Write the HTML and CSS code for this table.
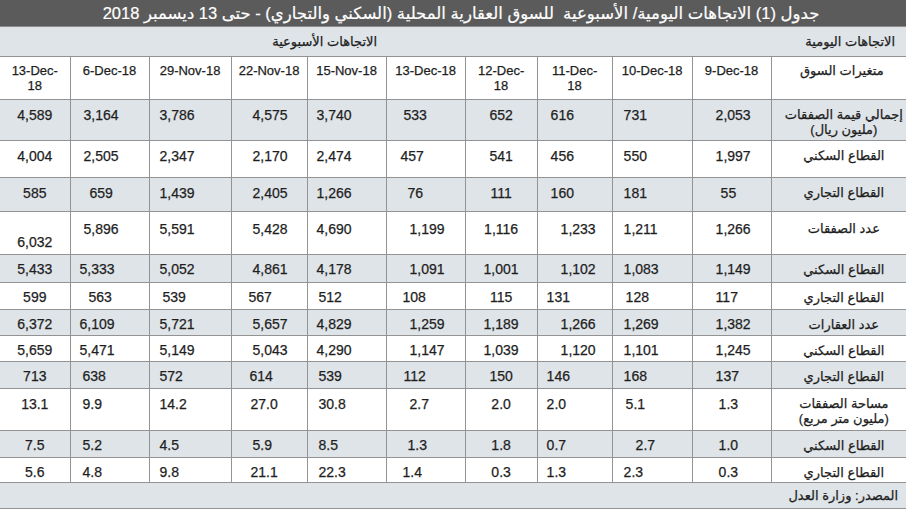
FILE: index.html
```html
<!DOCTYPE html>
<html lang="ar">
<head>
<meta charset="utf-8">
<link rel="stylesheet" href="styles.css">
</head>
<body>
<div class="sheet">
  <div class="title" dir="rtl">جدول (1) الاتجاهات اليومية/ الأسبوعية &nbsp;للسوق العقارية المحلية (السكني والتجاري) - حتى 13 ديسمبر 2018</div>
  <table class="grid" dir="rtl">
    <colgroup>
      <col class="c-label"><col class="c-9"><col class="c-10"><col class="c-11"><col class="c-12"><col class="c-13"><col class="c-15n"><col class="c-22n"><col class="c-29n"><col class="c-6d"><col class="c-13w">
    </colgroup>
    <tr class="sub">
      <th colspan="6">الاتجاهات اليومية</th>
      <th colspan="5">الاتجاهات الأسبوعية</th>
    </tr>
    <tr class="head">
      <th class="lab">متغيرات السوق</th>
      <th class="date">9-Dec-18</th>
      <th class="date">10-Dec-18</th>
      <th class="date">11-Dec-<br>18</th>
      <th class="date">12-Dec-<br>18</th>
      <th class="date">13-Dec-18</th>
      <th class="date">15-Nov-18</th>
      <th class="date">22-Nov-18</th>
      <th class="date">29-Nov-18</th>
      <th class="date">6-Dec-18</th>
      <th class="date">13-Dec-<br>18</th>
    </tr>
    <tr class="r1 shade">
      <td class="lab">إجمالي قيمة الصفقات<br>(مليون ريال)</td>
      <td>2,053</td><td>731</td><td>616</td><td>652</td><td class="p17">533</td><td>3,740</td><td>4,575</td><td>3,786</td><td>3,164</td><td>4,589</td>
    </tr>
    <tr class="r2">
      <td class="lab">القطاع السكني</td>
      <td>1,997</td><td>550</td><td>456</td><td>541</td><td class="p14">457</td><td>2,474</td><td>2,170</td><td>2,347</td><td>2,505</td><td>4,004</td>
    </tr>
    <tr class="r3 shade">
      <td class="lab">القطاع التجاري</td>
      <td class="p28">55</td><td>181</td><td>160</td><td>111</td><td class="p21">76</td><td>1,266</td><td>2,405</td><td>1,439</td><td class="p19">659</td><td>585</td>
    </tr>
    <tr class="r4">
      <td class="lab">عدد الصفقات</td>
      <td>1,266</td><td>1,211</td><td class="p23">1,233</td><td>1,116</td><td>1,199</td><td>4,690</td><td>5,428</td><td>5,591</td><td>5,896</td><td class="low">6,032</td>
    </tr>
    <tr class="r5 shade">
      <td class="lab">القطاع السكني</td>
      <td>1,149</td><td>1,083</td><td class="p23">1,102</td><td>1,001</td><td>1,091</td><td>4,178</td><td>4,861</td><td>5,052</td><td class="p9">5,333</td><td>5,433</td>
    </tr>
    <tr class="r6">
      <td class="lab">القطاع التجاري</td>
      <td>117</td><td class="p13">128</td><td class="p9">131</td><td>115</td><td class="p16">108</td><td class="p11">512</td><td class="p17">567</td><td class="p13">539</td><td class="p18">563</td><td>599</td>
    </tr>
    <tr class="r7 shade">
      <td class="lab">عدد العقارات</td>
      <td>1,382</td><td>1,269</td><td class="p23">1,266</td><td>1,189</td><td>1,259</td><td>4,829</td><td>5,657</td><td>5,721</td><td class="p9">6,109</td><td>6,372</td>
    </tr>
    <tr class="r8">
      <td class="lab">القطاع السكني</td>
      <td>1,245</td><td>1,101</td><td class="p23">1,120</td><td>1,039</td><td>1,147</td><td>4,290</td><td>5,043</td><td>5,149</td><td class="p9">5,471</td><td>5,659</td>
    </tr>
    <tr class="r9 shade">
      <td class="lab">القطاع التجاري</td>
      <td>137</td><td>168</td><td class="p9">146</td><td>150</td><td class="p17">112</td><td class="p11">539</td><td class="p18">614</td><td>572</td><td class="p12">638</td><td>713</td>
    </tr>
    <tr class="r10">
      <td class="lab">مساحة الصفقات<br>(مليون متر مربع)</td>
      <td class="p26">1.3</td><td class="p13">5.1</td><td class="p9">2.0</td><td>2.0</td><td>2.7</td><td class="p11">30.8</td><td class="p19">27.0</td><td>14.2</td><td class="p12">9.9</td><td>13.1</td>
    </tr>
    <tr class="r11 shade">
      <td class="lab">القطاع السكني</td>
      <td class="p26">1.0</td><td class="p23">2.7</td><td class="p9">0.7</td><td>1.8</td><td class="p21">1.3</td><td class="p11">8.5</td><td>5.9</td><td>4.5</td><td class="p12">5.2</td><td>7.5</td>
    </tr>
    <tr class="r12">
      <td class="lab">القطاع التجاري</td>
      <td class="p26">0.3</td><td>2.3</td><td class="p9">1.3</td><td>0.3</td><td class="p16">1.4</td><td class="p11">22.3</td><td class="p19">21.1</td><td>9.8</td><td class="p12">4.8</td><td>5.6</td>
    </tr>
    <tr class="source shade">
      <td colspan="11">المصدر: وزارة العدل</td>
    </tr>
  </table>
</div>
</body>
</html>
```

FILE: styles.css
```css
html, body {
  margin: 0;
  padding: 0;
  background: #ffffff;
}

.sheet {
  width: 906px;
  font-family: "Liberation Sans", "DejaVu Sans", sans-serif;
  color: #1e1e1e;
}

.title {
  height: 26px;
  line-height: 26px;
  padding-left: 16px;
  background: #5b5b5b;
  border-bottom: 1px solid #8c8c8c;
  color: #ffffff;
  font-size: 16.5px;
  text-align: center;
  white-space: nowrap;
  -webkit-text-stroke: 0.2px #ffffff;
}

.grid {
  width: 906px;
  table-layout: fixed;
  border-collapse: collapse;
  border-bottom: 1px solid #8e8e8e;
}

.c-label { width: 135px; }
.c-9 { width: 79px; }
.c-10 { width: 80px; }
.c-11 { width: 75px; }
.c-12 { width: 72px; }
.c-13 { width: 79px; }
.c-15n { width: 79px; }
.c-22n { width: 76px; }
.c-29n { width: 82px; }
.c-6d { width: 79px; }
.c-13w { width: 70px; }

.grid th,
.grid td {
  padding: 0;
  font-weight: normal;
  vertical-align: top;
  box-sizing: border-box;
  -webkit-text-stroke: 0.25px #1e1e1e;
}

.grid td {
  border: 1px solid #939393;
  border-top: 0;
  border-bottom: 1px solid #939393;
  font-size: 14px;
  line-height: 16px;
  padding-top: 7px;
  direction: ltr;
  text-align: left;
}

.grid tr td:first-child { border-right: 0; }
.grid tr td:last-child { border-left: 0; }

.shade td,
.sub th {
  background: #dfe4e8;
}

/* sub header */
.sub th {
  height: 29px;
  font-size: 13px;
  text-align: right;
  vertical-align: middle;
  border-bottom: 1px solid #939393;
}
.sub th:first-child { padding-right: 11px; }
.sub th:last-child { padding-right: 9px; }

/* header row */
.head th {
  height: 43px;
  font-size: 13px;
  line-height: 15px;
  padding-top: 6px;
  text-align: center;
  border-left: 1px solid #939393;
  border-bottom: 1px solid #939393;
}
.head th:last-child { border-left: 0; }
.head .date { direction: ltr; }
.head .lab { padding-left: 6px; }

/* label column */
.grid td.lab {
  direction: rtl;
  text-align: center;
  padding-left: 10px;
  font-size: 13px;
  line-height: 15px;
}

.r1 td { height: 41px; }
.r2 td { height: 37px; }
.r3 td { height: 34px; }
.r4 td { height: 43px; }
.r5 td { height: 28px; }
.r6 td { height: 27px; }
.r7 td { height: 26px; }
.r8 td { height: 26px; }
.r9 td { height: 27px; }
.r10 td { height: 42px; }
.r11 td { height: 27px; }
.r12 td { height: 25px; }

.r4 td { padding-top: 9px; }
.r5 td, .r6 td, .r7 td, .r8 td, .r9 td, .r11 td, .r12 td { padding-top: 6px; }
.r5 td.lab, .r6 td.lab, .r7 td.lab, .r8 td.lab, .r9 td.lab, .r11 td.lab, .r12 td.lab { padding-top: 7px; }

/* per-column default offsets */
.grid td:nth-child(2) { padding-left: 23px; }
.grid td:nth-child(3) { padding-left: 11px; }
.grid td:nth-child(4) { padding-left: 13px; }
.grid td:nth-child(5) { text-align: center; }
.grid td:nth-child(6) { padding-left: 23px; }
.grid td:nth-child(7) { padding-left: 9px; }
.grid td:nth-child(8) { padding-left: 21px; }
.grid td:nth-child(9) { padding-left: 10px; }
.grid td:nth-child(10) { padding-left: 13px; }
.grid td:nth-child(11) { text-align: center; }

.grid td.p9 { padding-left: 9px; }
.grid td.p11 { padding-left: 11px; }
.grid td.p12 { padding-left: 12px; }
.grid td.p13 { padding-left: 13px; }
.grid td.p14 { padding-left: 14px; }
.grid td.p16 { padding-left: 16px; }
.grid td.p17 { padding-left: 17px; }
.grid td.p18 { padding-left: 18px; }
.grid td.p19 { padding-left: 19px; }
.grid td.p21 { padding-left: 21px; }
.grid td.p23 { padding-left: 23px; }
.grid td.p26 { padding-left: 26px; }
.grid td.p28 { padding-left: 28px; }

.grid td.low {
  vertical-align: bottom;
  padding-top: 0;
  padding-bottom: 4px;
}

/* source row */
.source td {
  height: 26px;
  direction: rtl;
  text-align: right;
  font-size: 13px;
  padding-top: 5px;
  padding-right: 8px;
  border-left: 0;
  border-right: 0;
}
.grid .source td:first-child { padding-left: 0; }
```
